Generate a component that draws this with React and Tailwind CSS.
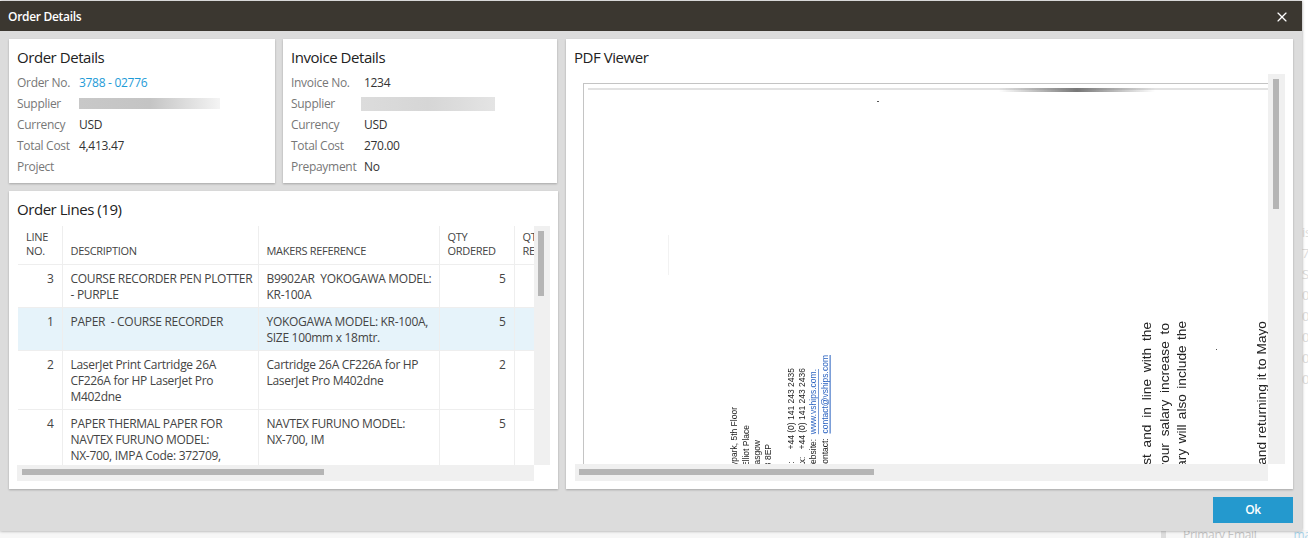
import { X } from 'lucide-react'

const font = 'font-["Open_Sans","Liberation_Sans",sans-serif] tracking-[-0.3px]'

const lines = [
  { no: 3, desc: 'COURSE RECORDER PEN PLOTTER\n- PURPLE', ref: 'B9902AR  YOKOGAWA MODEL:\nKR-100A', qty: 5 },
  { no: 1, desc: 'PAPER  - COURSE RECORDER', ref: 'YOKOGAWA MODEL: KR-100A,\nSIZE 100mm x 18mtr.', qty: 5, selected: true },
  { no: 2, desc: 'LaserJet Print Cartridge 26A\nCF226A for HP LaserJet Pro\nM402dne', ref: 'Cartridge 26A CF226A for HP\nLaserJet Pro M402dne', qty: 2 },
  { no: 4, desc: 'PAPER THERMAL PAPER FOR\nNAVTEX FURUNO MODEL:\nNX-700, IMPA Code: 372709,\n57mm x 30mtr', ref: 'NAVTEX FURUNO MODEL:\nNX-700, IM', qty: 5 },
]

const behindRows = ['is', '7', 'S', '0', '0', '0', '0', '0']

function Smudge({ className }) {
  return <div className={`absolute ${className}`} />
}

function InfoRow({ label, labelWidth, children }) {
  return (
    <div className="flex h-[21px] items-center text-[12px]">
      <span className={`${labelWidth} shrink-0 text-[#777]`}>{label}</span>
      <span className="relative text-[#333]">{children}</span>
    </div>
  )
}

function Card({ title, className, children }) {
  return (
    <section className={`bg-white shadow-[0_1px_2px_rgba(0,0,0,0.25)] ${className}`}>
      <h2 className="text-[15px] leading-[20px] tracking-[-0.45px] text-[#222]">{title}</h2>
      {children}
    </section>
  )
}

function PdfLine({ x, y, className, children }) {
  // rotated page text, placed on the page canvas
  return (
    <div
      className={`absolute whitespace-pre font-["Liberation_Sans",sans-serif] tracking-normal [writing-mode:vertical-rl] rotate-180 text-[#222] ${className}`}
      style={{ left: x - 575, top: y - 74 }}
    >
      {children}
    </div>
  )
}

function OrderLines() {
  return (
    <div className="mt-[7px] grid grid-cols-[517px_16px] grid-rows-[239px_16px]">
      <div className="overflow-hidden pl-px">
        <table className="w-[566px] table-fixed border-collapse text-[12px] leading-[16px] text-[#444]">
          <colgroup>
            <col className="w-[44px]" />
            <col className="w-[196px]" />
            <col className="w-[181px]" />
            <col className="w-[75px]" />
            <col className="w-[70px]" />
          </colgroup>
          <thead>
            <tr className="h-[38px] border-b border-[#eee] text-left align-bottom text-[11px] leading-[14px] text-[#444]">
              <th className="pb-[6px] pl-2 font-normal">LINE NO.</th>
              <th className="border-l border-[#eee] pb-[6px] pl-2 font-normal">DESCRIPTION</th>
              <th className="border-l border-[#eee] pb-[6px] pl-2 font-normal">MAKERS REFERENCE</th>
              <th className="border-l border-[#eee] pb-[6px] pl-2 font-normal">QTY ORDERED</th>
              <th className="border-l border-[#eee] pb-[6px] pl-2 font-normal">QTY RECEIVED</th>
            </tr>
          </thead>
          <tbody>
            {lines.map((line) => (
              <tr key={line.no} className={`border-b border-[#eee] align-top ${line.selected ? 'bg-[#e6f3fa]' : ''}`}>
                <td className="pt-[6px] pr-2 pb-1 text-right">{line.no}</td>
                <td className="border-l border-[#eee] pt-[6px] pb-1 pl-2 whitespace-pre">{line.desc}</td>
                <td className="border-l border-[#eee] pt-[6px] pb-1 pl-2 whitespace-pre">{line.ref}</td>
                <td className="border-l border-[#eee] pt-[6px] pr-2 pb-1 text-right">{line.qty}</td>
                <td className="border-l border-[#eee]" />
              </tr>
            ))}
          </tbody>
        </table>
      </div>
      <div className="bg-[#f0f0f0] px-[4px] pt-[5px]">
        <div className="h-[65px] w-[6px] bg-[#b5b5b5]" />
      </div>
      <div className="bg-[#f0f0f0] px-[5px] pt-[4px]">
        <div className="h-[6px] w-[302px] bg-[#b5b5b5]" />
      </div>
    </div>
  )
}

function PdfViewer() {
  return (
    <div className="mt-[7px] ml-px grid grid-cols-[693px_17px] grid-rows-[390px_17px]">
      <div className="relative overflow-hidden">
        <div className="mt-[9px] ml-2 h-[400px] border-t border-l border-[#c4c4c4] pt-1 pl-1">
          <div className="h-[2px] bg-[#e2e2e2] blur-[0.5px]" />
        </div>
        <Smudge className="top-[14px] left-[424px] h-[4px] w-[156px] bg-gradient-to-r from-transparent via-[#777] to-transparent blur-[0.5px]" />
        <Smudge className="top-[27px] left-[302px] h-px w-[2px] bg-[#555]" />
        <Smudge className="top-[161px] left-[93px] h-[40px] w-px bg-[#f2f2f2]" />
        <Smudge className="top-[275px] left-[641px] h-px w-px bg-[#555]" />

        <PdfLine x={729} y={407} className="text-[8.5px] leading-[11px]">Skypark, 5th Floor</PdfLine>
        <PdfLine x={741} y={425} className="text-[8.5px] leading-[11px]">8 Elliot Place</PdfLine>
        <PdfLine x={752} y={440} className="text-[8.5px] leading-[11px]">Glasgow</PdfLine>
        <PdfLine x={763} y={444} className="text-[8.5px] leading-[11px]">G3 8EP</PdfLine>
        <PdfLine x={786} y={368} className="text-[8.5px] leading-[11px]">{'Tel:     +44 (0) 141 243 2435'}</PdfLine>
        <PdfLine x={797} y={368} className="text-[8.5px] leading-[11px]">{'Fax:   +44 (0) 141 243 2436'}</PdfLine>
        <PdfLine x={808} y={369} className="text-[8.5px] leading-[11px]">
          {'Website:  '}<span className="text-[#2a62c0] underline">www.vships.com.</span>
        </PdfLine>
        <PdfLine x={820} y={355} className="text-[8.5px] leading-[11px]">
          {'Contact:  '}<span className="text-[#2a62c0] underline">contact@vships.com</span>
        </PdfLine>

        <PdfLine x={1139} y={322} className="text-[13.7px] leading-[16px] [word-spacing:3px]">request and in line with the</PdfLine>
        <PdfLine x={1157} y={323} className="text-[13.7px] leading-[16px] [word-spacing:3px]">your salary increase to</PdfLine>
        <PdfLine x={1174} y={321} className="text-[13.7px] leading-[16px] [word-spacing:1.5px]">salary will also include the</PdfLine>
        <PdfLine x={1254} y={321} className="text-[13.7px] leading-[16px]">and returning it to Mayo</PdfLine>
      </div>
      <div className="bg-[#f0f0f0] px-[5px] pt-[5px]">
        <div className="h-[130px] w-[6px] bg-[#b5b5b5]" />
      </div>
      <div className="bg-[#f0f0f0] pt-[5px] pl-[4px]">
        <div className="h-[6px] w-[295px] bg-[#b5b5b5]" />
      </div>
    </div>
  )
}

export default function App() {
  return (
    <div className={`relative flex h-[538px] flex-col overflow-hidden bg-white ${font}`}>
      {/* page behind the dialog, only its edges show */}
      <div className="ml-auto flex w-[6px] flex-1 flex-col overflow-hidden pt-[222px] text-[13px] leading-[21px] text-[#ddd]">
        {behindRows.map((t, i) => (
          <span key={i}>{t}</span>
        ))}
      </div>
      <div className="flex h-[8px] items-start bg-[#f7f7f7] pl-[1161px] text-[12px] leading-[10px] whitespace-nowrap text-[#c4c4c4]">
        <span className="h-[8px] w-[5px] shrink-0 bg-[#ddd]" />
        <span className="ml-[17px] shrink-0">Primary Email</span>
        <span className="ml-[37px] shrink-0 text-[#a8d4ea]">ma</span>
      </div>

      <div className="absolute top-px left-0 flex h-[530px] w-[1302px] flex-col bg-[#dcdcdc] shadow-[0_0_3px_rgba(0,0,0,0.4)]">
        <header className="flex h-[30px] shrink-0 items-center justify-between bg-[#3b3730] pt-px pr-[12px] pl-2 text-white">
          <span className="text-[12px] font-semibold">Order Details</span>
          <X size={16} strokeWidth={1.75} />
        </header>

        <main className="flex gap-2 pt-2 pr-[9px] pl-[9px]">
          <div className="flex w-[549px] flex-col gap-2">
            <div className="flex h-[144px] gap-2">
              <Card title="Order Details" className="w-[266px] px-2 pt-2">
                <div className="mt-[5px]">
                  <InfoRow label="Order No." labelWidth="w-[62px]"><span className="text-[#1e9bd7]">3788 - 02776</span></InfoRow>
                  <InfoRow label="Supplier" labelWidth="w-[62px]">
                    <span className="block h-[11px] w-[141px] bg-gradient-to-r from-[#c8c8c8] via-[#c4c4c4] to-[#f4f4f4]" />
                  </InfoRow>
                  <InfoRow label="Currency" labelWidth="w-[62px]">USD</InfoRow>
                  <InfoRow label="Total Cost" labelWidth="w-[62px]">4,413.47</InfoRow>
                  <InfoRow label="Project" labelWidth="w-[62px]" />
                </div>
              </Card>
              <Card title="Invoice Details" className="w-[274px] px-2 pt-2">
                <div className="mt-[5px]">
                  <InfoRow label="Invoice No." labelWidth="w-[73px]">1234</InfoRow>
                  <InfoRow label="Supplier" labelWidth="w-[70px]">
                    <span className="block h-[14px] w-[134px] bg-gradient-to-r from-[#dcdcdc] via-[#d6d6d6] to-[#e4e4e4]" />
                  </InfoRow>
                  <InfoRow label="Currency" labelWidth="w-[73px]">USD</InfoRow>
                  <InfoRow label="Total Cost" labelWidth="w-[73px]">270.00</InfoRow>
                  <InfoRow label="Prepayment" labelWidth="w-[73px]">No</InfoRow>
                </div>
              </Card>
            </div>
            <Card title="Order Lines (19)" className="h-[298px] pt-2 pl-2">
              <OrderLines />
            </Card>
          </div>

          <Card title="PDF Viewer" className="h-[450px] w-[727px] pt-2 pl-2">
            <PdfViewer />
          </Card>
        </main>

        <footer className="flex justify-end pt-2 pr-[9px]">
          <button className="h-[26px] w-[80px] bg-[#2499ce] text-[12px] font-semibold text-white">Ok</button>
        </footer>
      </div>
    </div>
  )
}
